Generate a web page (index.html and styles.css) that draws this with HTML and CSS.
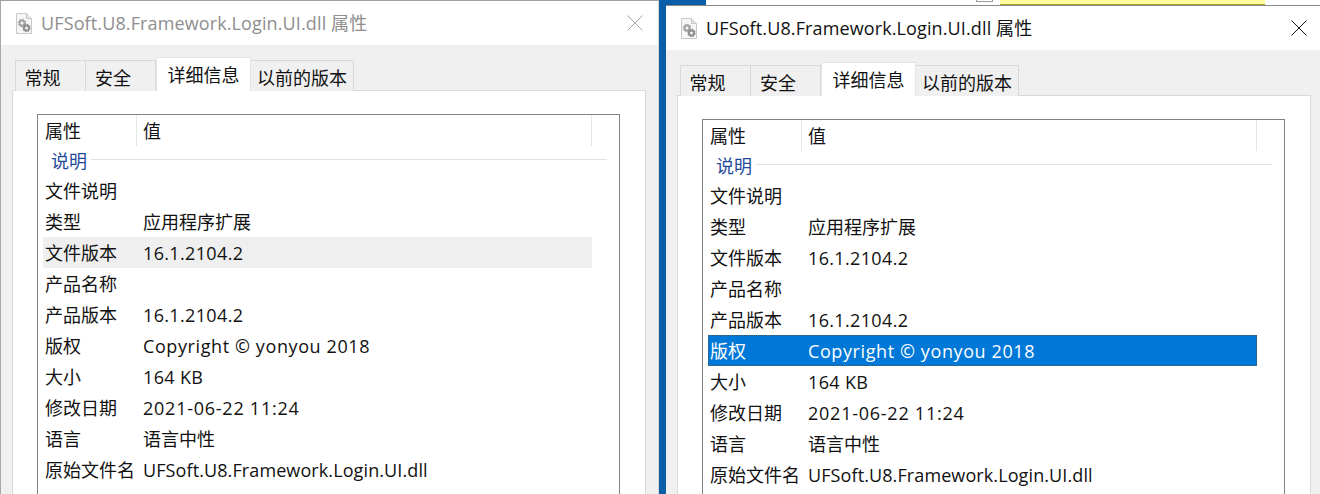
FILE: index.html
```html
<!DOCTYPE html>
<html lang="zh-CN">
<head>
  <meta charset="UTF-8" />
  <title>UFSoft.U8.Framework.Login.UI.dll 属性</title>
  <link rel="stylesheet" href="styles.css">
</head>
<body>
  <div class="desktop">
    <div class="dialog inactive">
      <div class="titlebar">
        <svg class="file-icon" width="16" height="21" viewBox="0 0 16 21"><path d="M.5.5h10l5 5v15H.5z" fill="#f6f6f6" stroke="#c8c8c8"/><path d="M10.5.5v5h5" fill="#e4e4e4" stroke="#c8c8c8"/><circle cx="6" cy="10" r="2.5" fill="none" stroke="#a4a4a4" stroke-width="2"/><circle cx="6" cy="10" r="3.6" fill="none" stroke="#a4a4a4" stroke-width="1.2" stroke-dasharray="1.5 1.3"/><circle cx="10.5" cy="15" r="2.5" fill="none" stroke="#8e8e8e" stroke-width="2"/><circle cx="10.5" cy="15" r="3.6" fill="none" stroke="#8e8e8e" stroke-width="1.2" stroke-dasharray="1.5 1.3"/></svg>
        <span class="title">UFSoft.U8.Framework.Login.UI.dll 属性</span>
        <svg class="close" width="16" height="16" viewBox="0 0 16 16"><path d="M.5.5l15 15M15.5.5l-15 15" stroke="currentColor" fill="none"/></svg>
      </div>
      <div class="body">
        <div class="tabs">
          <span class="tab tab-a">常规</span>
          <span class="tab tab-b">安全</span>
          <span class="tab active">详细信息</span>
          <span class="tab tab-d">以前的版本</span>
        </div>
        <div class="page">
          <div class="list">
            <div class="head"><span class="col1">属性</span><span class="col2">值</span></div>
            <div class="group"><span>说明</span></div>
            <div class="row"><span class="col1">文件说明</span><span class="col2"></span></div>
            <div class="row"><span class="col1">类型</span><span class="col2 cjk">应用程序扩展</span></div>
            <div class="row hover"><span class="col1">文件版本</span><span class="col2 ver">16.1.2104.2</span></div>
            <div class="row"><span class="col1">产品名称</span><span class="col2"></span></div>
            <div class="row"><span class="col1">产品版本</span><span class="col2 ver">16.1.2104.2</span></div>
            <div class="row"><span class="col1">版权</span><span class="col2 copy">Copyright © yonyou 2018</span></div>
            <div class="row"><span class="col1">大小</span><span class="col2 ver">164 KB</span></div>
            <div class="row"><span class="col1">修改日期</span><span class="col2 date">2021-06-22 11:24</span></div>
            <div class="row"><span class="col1">语言</span><span class="col2 cjk">语言中性</span></div>
            <div class="row"><span class="col1">原始文件名</span><span class="col2 fname">UFSoft.U8.Framework.Login.UI.dll</span></div>
          </div>
        </div>
      </div>
    </div>

    <div class="blue-strip"></div>

    <div class="right-side">
      <div class="top-strip">
        <div class="top-blue"></div>
        <div class="top-box"></div>
        <div class="top-yellow"></div>
      </div>
      <div class="dialog">
        <div class="titlebar">
          <svg class="file-icon" width="16" height="21" viewBox="0 0 16 21"><path d="M.5.5h10l5 5v15H.5z" fill="#f6f6f6" stroke="#c8c8c8"/><path d="M10.5.5v5h5" fill="#e4e4e4" stroke="#c8c8c8"/><circle cx="6" cy="10" r="2.5" fill="none" stroke="#a4a4a4" stroke-width="2"/><circle cx="6" cy="10" r="3.6" fill="none" stroke="#a4a4a4" stroke-width="1.2" stroke-dasharray="1.5 1.3"/><circle cx="10.5" cy="15" r="2.5" fill="none" stroke="#8e8e8e" stroke-width="2"/><circle cx="10.5" cy="15" r="3.6" fill="none" stroke="#8e8e8e" stroke-width="1.2" stroke-dasharray="1.5 1.3"/></svg>
          <span class="title">UFSoft.U8.Framework.Login.UI.dll 属性</span>
          <svg class="close" width="16" height="16" viewBox="0 0 16 16"><path d="M.5.5l15 15M15.5.5l-15 15" stroke="currentColor" fill="none"/></svg>
        </div>
        <div class="body">
          <div class="tabs">
            <span class="tab tab-a">常规</span>
            <span class="tab tab-b">安全</span>
            <span class="tab active">详细信息</span>
            <span class="tab tab-d">以前的版本</span>
          </div>
          <div class="page">
            <div class="list">
              <div class="head"><span class="col1">属性</span><span class="col2">值</span></div>
              <div class="group"><span>说明</span></div>
              <div class="row"><span class="col1">文件说明</span><span class="col2"></span></div>
              <div class="row"><span class="col1">类型</span><span class="col2 cjk">应用程序扩展</span></div>
              <div class="row"><span class="col1">文件版本</span><span class="col2 ver">16.1.2104.2</span></div>
              <div class="row"><span class="col1">产品名称</span><span class="col2"></span></div>
              <div class="row"><span class="col1">产品版本</span><span class="col2 ver">16.1.2104.2</span></div>
              <div class="row selected"><span class="col1">版权</span><span class="col2 copy">Copyright © yonyou 2018</span></div>
              <div class="row"><span class="col1">大小</span><span class="col2 ver">164 KB</span></div>
              <div class="row"><span class="col1">修改日期</span><span class="col2 date">2021-06-22 11:24</span></div>
              <div class="row"><span class="col1">语言</span><span class="col2 cjk">语言中性</span></div>
              <div class="row"><span class="col1">原始文件名</span><span class="col2 fname">UFSoft.U8.Framework.Login.UI.dll</span></div>
            </div>
          </div>
        </div>
      </div>
    </div>
  </div>
</body>
</html>
```

FILE: styles.css
```css
* {
  box-sizing: border-box;
}
html, body {
  margin: 0;
  height: 494px;
  overflow: hidden;
}
body {
  font-family: "Open Sans", "Noto Sans CJK SC", sans-serif;
  font-size: 18px;
  color: #111;
  background: #fff;
}

.desktop {
  display: flex;
  height: 494px;
  overflow: hidden;
}

/* Dialog */
.dialog {
  display: flex;
  flex-direction: column;
  flex: 1;
  min-height: 0;
  overflow: hidden;
  background: #f0f0f0;
}
.dialog.inactive {
  flex: none;
  width: 659px;
  border-top: 1px solid #a0a0a0;
  border-left: 1px solid #a8a8a8;
  border-right: 1px solid #d8d8d8;
}
.titlebar {
  display: flex;
  align-items: center;
  flex: none;
  height: 44px;
  padding: 0 13px 0 15px;
  background: #fff;
}
.inactive .titlebar {
  padding-right: 15px;
}
.file-icon {
  flex: none;
  margin-right: 9px;
}
.title {
  flex: 1;
  padding-bottom: 2px;
  letter-spacing: 0.12px;
  white-space: nowrap;
}
.close {
  color: #111;
}
.inactive .title {
  color: #8e8e8e;
}
.inactive .close {
  color: #a6a6a6;
}

.body {
  display: flex;
  flex-direction: column;
  flex: 1;
  min-height: 0;
  padding-left: 11px;
}

/* Tabs */
.tabs {
  display: flex;
  align-items: flex-end;
  flex: none;
  height: 45px;
  padding-left: 3px;
  position: relative;
  z-index: 1;
}
.tab {
  display: flex;
  justify-content: center;
  align-items: center;
  height: 31px;
  margin-bottom: -1px;
  padding-top: 2px;
  background: #f0f0f0;
  border: 1px solid #d9d9d9;
  border-bottom: none;
  white-space: nowrap;
}
.tab-a {
  width: 71px;
  padding-right: 16px;
}
.tab-b {
  width: 70px;
  padding-right: 15px;
  border-left: none;
}
.tab.active {
  width: 95px;
  height: 34px;
  padding-top: 0;
  padding-bottom: 2px;
  background: #fff;
  border-color: #e4e4e4;
}
.tab-d {
  width: 103px;
  border-left: none;
}

.page {
  flex: 1;
  width: 634px;
  min-height: 0;
  padding: 23px 0 0 24px;
  background: #fff;
  border: 1px solid #d9d9d9;
  border-bottom: none;
}

/* Details list */
.list {
  width: 583px;
  height: 100%;
  overflow: hidden;
  background: #fff;
  border: 1px solid #828282;
  border-bottom: none;
}
.head {
  display: flex;
  height: 31px;
}
.head span {
  display: flex;
  align-items: center;
  padding-bottom: 2px;
  border-right: 1px solid #e5e5e5;
}
.head .col1 {
  width: 99px;
  padding-left: 7px;
}
.head .col2 {
  width: 455px;
  padding-left: 6px;
}
.group {
  display: flex;
  align-items: center;
  height: 29px;
  margin-right: 12px;
  padding: 0 0 2px 13px;
  color: #1f4a99;
}
.group::after {
  content: "";
  flex: 1;
  height: 1px;
  margin-left: 4px;
  background: #e2e2e2;
}
.row {
  display: flex;
  align-items: center;
  width: 549px;
  height: 31px;
  margin-left: 5px;
  white-space: nowrap;
}
.col1 {
  flex: none;
  width: 98px;
  padding-left: 2px;
  padding-bottom: 2px;
}
.col2 {
  padding-left: 2px;
}
.cjk {
  padding-bottom: 2px;
}
.ver {
  letter-spacing: 0.35px;
}
.copy {
  letter-spacing: 0.6px;
}
.date {
  letter-spacing: 0.75px;
}
.fname {
  letter-spacing: 0.1px;
}
.hover {
  background: #efefef;
}
.selected {
  background: #0078d7;
  color: #fff;
  outline: 1px dotted #555;
  outline-offset: -1px;
}

/* Right window */
.blue-strip {
  flex: none;
  width: 7px;
  background: #0a5ea8;
}
.right-side {
  display: flex;
  flex-direction: column;
  flex: 1;
  min-width: 0;
}
.top-strip {
  display: flex;
  flex: none;
  height: 5px;
  background: #fff;
}
.top-blue {
  width: 40px;
  background: #0a5ea8;
}
.top-box {
  width: 17px;
  height: 2px;
  margin-left: 270px;
  border: 1px solid #999;
  border-top: none;
}
.top-yellow {
  width: 265px;
  margin-left: 7px;
  background: #fdfb9a;
  border-bottom: 1px solid #a3a32a;
}
.right-side .dialog {
  border-top: 1px solid #888;
}
```
